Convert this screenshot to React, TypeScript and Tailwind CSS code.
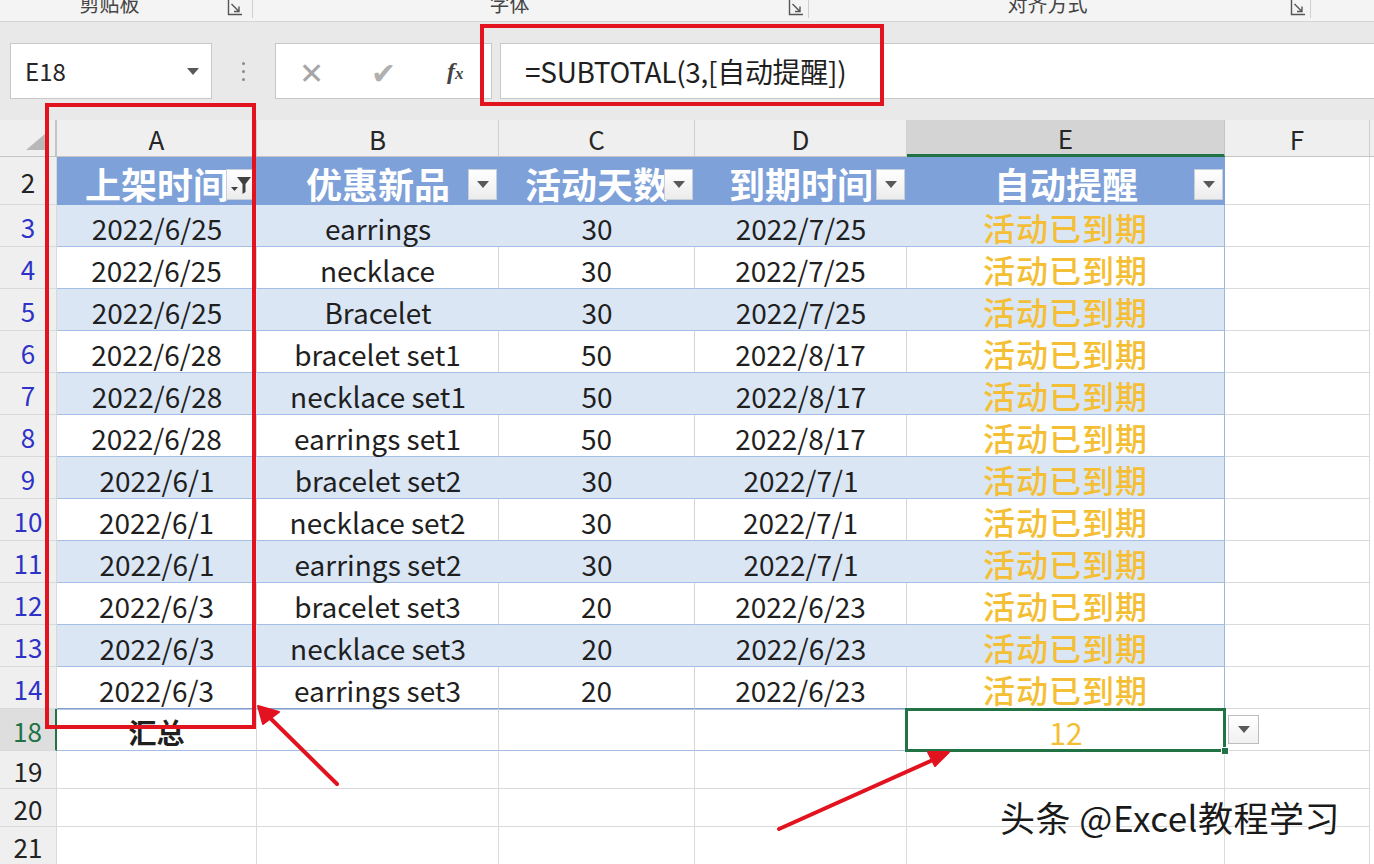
import React from 'react';

type Row = [string, string, string, string];

const data: Row[] = [
  ['2022/6/25', 'earrings', '30', '2022/7/25'],
  ['2022/6/25', 'necklace', '30', '2022/7/25'],
  ['2022/6/25', 'Bracelet', '30', '2022/7/25'],
  ['2022/6/28', 'bracelet set1', '50', '2022/8/17'],
  ['2022/6/28', 'necklace set1', '50', '2022/8/17'],
  ['2022/6/28', 'earrings set1', '50', '2022/8/17'],
  ['2022/6/1', 'bracelet set2', '30', '2022/7/1'],
  ['2022/6/1', 'necklace set2', '30', '2022/7/1'],
  ['2022/6/1', 'earrings set2', '30', '2022/7/1'],
  ['2022/6/3', 'bracelet set3', '20', '2022/6/23'],
  ['2022/6/3', 'necklace set3', '20', '2022/6/23'],
  ['2022/6/3', 'earrings set3', '20', '2022/6/23'],
];

const headers = ['上架时间', '优惠新品', '活动天数', '到期时间', '自动提醒'];
const letters = ['A', 'B', 'C', 'D', 'E', 'F'];

// little "dialog launcher" corner icon of the ribbon groups
function Launcher() {
  return (
    <svg width="16" height="16" viewBox="0 0 16 16">
      <path d="M1.5 0 V14.5 H15" fill="none" stroke="#555" strokeWidth="1.4" />
      <path d="M4.5 4 L12 11.5 M12 6.5 V11.5 H7" fill="none" stroke="#555" strokeWidth="1.4" />
    </svg>
  );
}

function DownTri() {
  return (
    <svg width="12" height="7" viewBox="0 0 12 7">
      <path d="M0 0 H12 L6 7 Z" fill="#595959" />
    </svg>
  );
}

function FilterButton({ funnel }: { funnel?: boolean }) {
  return (
    <div className="absolute right-[2px] top-[12px] w-[29px] h-[31px] bg-gradient-to-b from-white to-[#ececec] border border-[#c7cfdb] flex items-center justify-center">
      {funnel ? (
        <svg width="22" height="20" viewBox="0 0 22 20">
          <path d="M7 2 H21 L15.5 9 V17 L12.5 19 V9 Z" fill="#404040" />
          <path d="M1 12 H8 L4.5 16 Z" fill="#404040" />
        </svg>
      ) : (
        <DownTri />
      )}
    </div>
  );
}

export default function App() {
  const rowHead = 'flex items-center justify-center pt-[3px] text-[26px] bg-[#efefef] border-r border-[#c4c4c4] border-b border-[#d9d9d9] leading-none';
  const plain = 'bg-white border-r border-b border-[#dadada]';

  return (
    <div className="relative w-[1374px] h-[864px] overflow-hidden bg-white font-['Noto_Sans_CJK_SC','Noto_Sans',sans-serif] text-[#1f1f1f]">
      {/* ribbon group labels (cut off at the top) */}
      <div className="h-[22px] bg-[#f4f4f4] border-b border-[#d4d4d4] flex overflow-hidden">
        <div className="w-[253px] flex border-r border-[#cfcfcf] h-[18px]">
          <div className="flex-1 text-center text-[20px] leading-none mt-[-6px] text-[#444]">剪贴板</div>
          <div className="w-[33px] pl-[8px]"><Launcher /></div>
        </div>
        <div className="w-[556px] flex border-r border-[#cfcfcf] h-[18px]">
          <div className="flex-1 text-center text-[20px] leading-none mt-[-6px] text-[#444]">字体</div>
          <div className="w-[42px] pl-[22px]"><Launcher /></div>
        </div>
        <div className="w-[502px] flex border-r border-[#cfcfcf] h-[18px]">
          <div className="flex-1 text-center text-[20px] leading-none mt-[-6px] text-[#444]">对齐方式</div>
          <div className="w-[24px] pl-[4px]"><Launcher /></div>
        </div>
      </div>

      {/* formula bar */}
      <div className="h-[98px] bg-[#e9e9e9] flex items-start pt-[21px] pl-[10px]">
        <div className="w-[202px] h-[56px] bg-white border border-[#c8c8c8] flex items-center pl-[14px] pr-[12px]">
          <span className="flex-1 text-[24px] text-[#262626]">E18</span>
          <DownTri />
        </div>
        <div className="w-[63px] h-[56px] flex flex-col items-center justify-center gap-[5px]">
          <span className="w-[3px] h-[3px] rounded-full bg-[#8a8a8a]" />
          <span className="w-[3px] h-[3px] rounded-full bg-[#8a8a8a]" />
          <span className="w-[3px] h-[3px] rounded-full bg-[#8a8a8a]" />
        </div>
        <div className="w-[217px] h-[56px] bg-white border border-[#c8c8c8] flex items-center">
          <span className="w-[72px] text-center text-[30px] font-light text-[#a6a6a6] leading-none">✕</span>
          <span className="w-[72px] text-center text-[30px] text-[#b0b0b0] leading-none">✔</span>
          <span className="w-[72px] text-center text-[24px] italic font-bold text-[#444] font-['Liberation_Serif',serif] leading-none">
            f<span className="text-[17px]">x</span>
          </span>
        </div>
        <div className="ml-[8px] flex-1 h-[56px] bg-white border-y border-l border-[#c8c8c8] flex items-center pl-[24px]">
          <span className="text-[28px] text-[#1f1f1f] tracking-[-0.3px]">=SUBTOTAL(3,[自动提醒])</span>
        </div>
      </div>

      {/* sheet */}
      <div className="grid grid-cols-[57px_200px_242px_196px_212px_318px_145px_4px]">
        {/* column letters */}
        <div className="h-[37px] bg-[#efefef] border-r-2 border-[#b5b5b5] border-b border-[#c4c4c4] relative">
          <svg width="20" height="17" viewBox="0 0 20 17" className="absolute right-[9px] bottom-[6px]">
            <path d="M20 0 V17 H0 Z" fill="#b8b8b8" />
          </svg>
        </div>
        {letters.map((l) => (
          <div
            key={l}
            className={
              l === 'E'
                ? 'h-[37px] bg-[#d4d4d4] border-r border-[#c4c4c4] border-b-[3px] border-b-[#217346] flex items-center justify-center text-[26px] text-[#262626]'
                : 'h-[37px] bg-[#efefef] border-r border-[#cfcfcf] border-b border-b-[#c4c4c4] flex items-center justify-center text-[26px] text-[#262626]'
            }
          >
            {l}
          </div>
        ))}
        <div className="h-[37px] bg-[#efefef] border-b border-[#c4c4c4]" />

        {/* row 2: table header */}
        <div className={`h-[48px] text-[#222] ${rowHead}`}>2</div>
        {headers.map((h, i) => (
          <div
            key={h}
            className="h-[48px] relative bg-[#7ea1d9] flex items-center justify-center pt-[4px] text-[36px] font-bold text-white leading-none overflow-hidden"
          >
            {h}
            <FilterButton funnel={i === 0} />
          </div>
        ))}
        <div className={`h-[48px] ${plain}`} />
        <div className="h-[48px] bg-white" />

        {/* data rows 3-14 */}
        {data.map((r, idx) => {
          const n = idx + 3;
          const blue = n % 2 === 1;
          const last = n === 14;
          const cell = blue
            ? 'h-[42px] bg-[#dbe6f5] border-b border-[#a5bee3] flex items-center justify-center pt-[5px] text-[28px] leading-none'
            : last
              ? 'h-[42px] bg-white border-b border-b-[#7f9fd3] border-r border-r-[#d6d6d6] flex items-center justify-center pt-[5px] text-[28px] leading-none'
              : 'h-[42px] bg-white border-b border-b-[#a5bee3] border-r border-r-[#d6d6d6] flex items-center justify-center pt-[5px] text-[28px] leading-none';
          return (
            <React.Fragment key={n}>
              <div className={`h-[42px] text-[#2e32c6] ${rowHead}`}>{n}</div>
              {r.map((v, j) => (
                <div key={j} className={cell}>
                  {v}
                </div>
              ))}
              <div
                className={
                  blue
                    ? 'h-[42px] bg-[#dbe6f5] border-b border-b-[#a5bee3] border-r border-r-[#9db6df] flex items-center justify-center pt-[2px] text-[32px] tracking-[1px] font-medium text-[#f4bf35] leading-none'
                    : 'h-[42px] bg-white border-b border-b-[#a5bee3] border-r border-r-[#9db6df] flex items-center justify-center pt-[2px] text-[32px] tracking-[1px] font-medium text-[#f4bf35] leading-none'
                }
              >
                活动已到期
              </div>
              <div className={`h-[42px] ${plain}`} />
              <div className="h-[42px] bg-white" />
            </React.Fragment>
          );
        })}

        {/* row 18: totals */}
        <div className="h-[42px] flex items-center justify-center pt-[3px] text-[26px] leading-none bg-[#dedede] border-r-2 border-r-[#217346] border-b border-b-[#d9d9d9] text-[#217346]">
          18
        </div>
        <div className="h-[42px] bg-white border-t border-t-[#b7c7df] border-r border-r-[#d6d6d6] border-b border-b-[#a5bee3] flex items-center justify-center pt-[3px] text-[28px] font-bold leading-none">
          汇总
        </div>
        <div className="h-[42px] bg-white border-t border-t-[#b7c7df] border-r border-r-[#d6d6d6] border-b border-b-[#a5bee3]" />
        <div className="h-[42px] bg-white border-t border-t-[#b7c7df] border-r border-r-[#d6d6d6] border-b border-b-[#a5bee3]" />
        <div className="h-[42px] bg-white border-t border-t-[#b7c7df] border-r border-r-[#d6d6d6] border-b border-b-[#a5bee3]" />
        <div className="h-[42px] relative bg-white border-t border-t-[#b7c7df] border-b border-b-[#a5bee3] flex items-center justify-center pt-[3px] text-[30px] text-[#f4bf35] leading-none">
          12
          <div className="absolute -left-[2px] -top-[2px] -right-[1px] -bottom-[2px] border-[3px] border-[#217346]" />
          <div className="absolute -right-[4px] -bottom-[5px] w-[8px] h-[8px] bg-[#217346] border border-white" />
        </div>
        <div className={`h-[42px] ${plain} flex items-center pl-[3px]`}>
          <div className="w-[31px] h-[29px] bg-gradient-to-b from-white to-[#f0f0f0] border border-[#bdbdbd] flex items-center justify-center">
            <DownTri />
          </div>
        </div>
        <div className="h-[42px] bg-white" />

        {/* empty rows 19-21 */}
        {[19, 20, 21].map((n) => (
          <React.Fragment key={n}>
            <div className={`h-[38px] text-[#222] ${rowHead}`}>{n}</div>
            {letters.map((l) => (
              <div key={l} className={`h-[38px] ${plain}`} />
            ))}
            <div className="h-[38px] bg-white" />
          </React.Fragment>
        ))}
      </div>

      {/* watermark */}
      <div className="absolute left-[1000px] top-[799px] text-[35px] tracking-[0.5px] leading-none text-[#1a1a1a] [text-shadow:0_0_2px_#fff,1px_1px_1px_#fff,-1px_-1px_1px_#fff]">
        头条 @Excel教程学习
      </div>

      {/* red annotations */}
      <svg className="absolute inset-0 pointer-events-none" width="1374" height="864" viewBox="0 0 1374 864">
        <rect x="482" y="26" width="400" height="78" fill="none" stroke="#e2131f" strokeWidth="4" />
        <rect x="47" y="105" width="207" height="622" fill="none" stroke="#e2131f" strokeWidth="4" />
        <path d="M337 784 L262 710" stroke="#e2131f" strokeWidth="4" strokeLinecap="round" />
        <path d="M258 706 L279 712 L263 724 Z" fill="#e2131f" stroke="#e2131f" strokeWidth="2" strokeLinejoin="round" />
        <path d="M779 829 L944 755" stroke="#e2131f" strokeWidth="4" strokeLinecap="round" />
        <path d="M949 752 L935 766 L928 752 Z" fill="#e2131f" stroke="#e2131f" strokeWidth="2" strokeLinejoin="round" />
      </svg>
    </div>
  );
}
